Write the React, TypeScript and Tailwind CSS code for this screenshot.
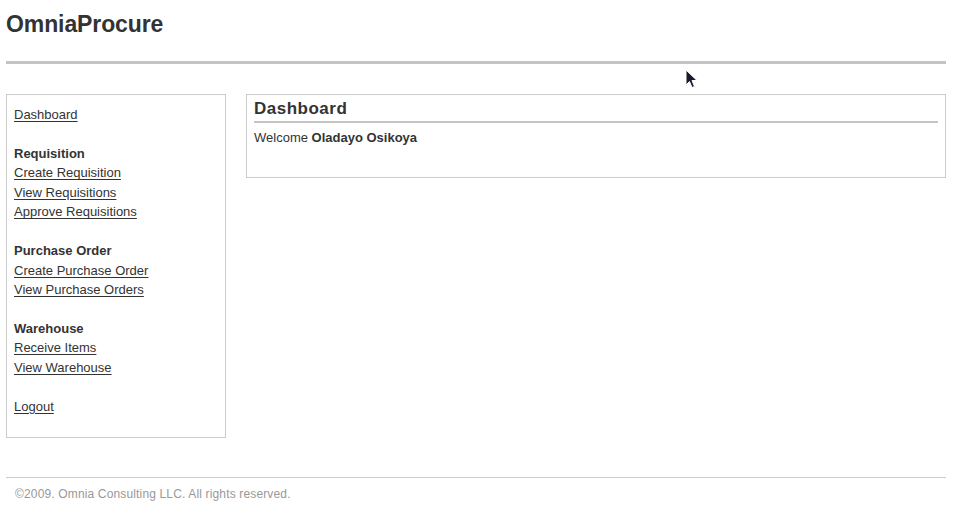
import React from "react";

const groups: { title?: string; links: string[] }[] = [
  { links: ["Dashboard"] },
  { title: "Requisition", links: ["Create Requisition", "View Requisitions", "Approve Requisitions"] },
  { title: "Purchase Order", links: ["Create Purchase Order", "View Purchase Orders"] },
  { title: "Warehouse", links: ["Receive Items", "View Warehouse"] },
  { links: ["Logout"] },
];

export default function App() {
  return (
    <div className="relative w-[957px] min-h-[509px] bg-white font-['Liberation_Sans',Arial,sans-serif] text-[#333]">
      <div className="w-[940px] ml-[6px]">
        <header className="pt-[13px] pb-[25px] border-b-[3px] border-[#c4c4c4]">
          <h1 className="text-[23px] font-bold leading-none tracking-[-0.1px]">OmniaProcure</h1>
        </header>

        <div className="mt-[30px] flex items-start gap-[20px]">
          <nav className="w-[220px] shrink-0 border border-[#cccccc] pt-[10px] pb-[21px] px-[7px] text-[13px] leading-[19.45px]">
            {groups.map((g, i) => (
              <div key={i} className={i > 0 ? "mt-[19.45px]" : ""}>
                {g.title && <div className="font-bold">{g.title}</div>}
                {g.links.map((l) => (
                  <div key={l}>
                    <a href="#" className="underline underline-offset-2 text-[#333]">
                      {l}
                    </a>
                  </div>
                ))}
              </div>
            ))}
          </nav>

          <section className="flex-1 border border-[#cccccc] px-[7px] pb-[29px]">
            <h2 className="pt-[3px] pb-[1px] text-[17px] leading-[22px] font-bold border-b-2 border-[#c4c4c4] tracking-[0.5px]">
              Dashboard
            </h2>
            <p className="mt-[5px] text-[13px] leading-[19.5px]">
              Welcome <span className="font-bold">Oladayo Osikoya</span>
            </p>
          </section>
        </div>

        <footer className="mt-[39px] border-t border-[#cccccc] pt-[8px] pl-[9px] text-[12px] leading-[16px] tracking-[0.15px] text-[#999]">
          ©2009. Omnia Consulting LLC. All rights reserved.
        </footer>
      </div>

      <svg
        className="absolute left-[685px] top-[69px]"
        width="14"
        height="21"
        viewBox="0 0 14 21"
      >
        <path
          d="M1 1 L1 16 L4.5 12.5 L7 18.5 L9.5 17.5 L7 11.5 L12 11.5 Z"
          fill="#1a1a2e"
          stroke="#ffffff"
          strokeWidth="1"
          strokeLinejoin="round"
        />
      </svg>
    </div>
  );
}
